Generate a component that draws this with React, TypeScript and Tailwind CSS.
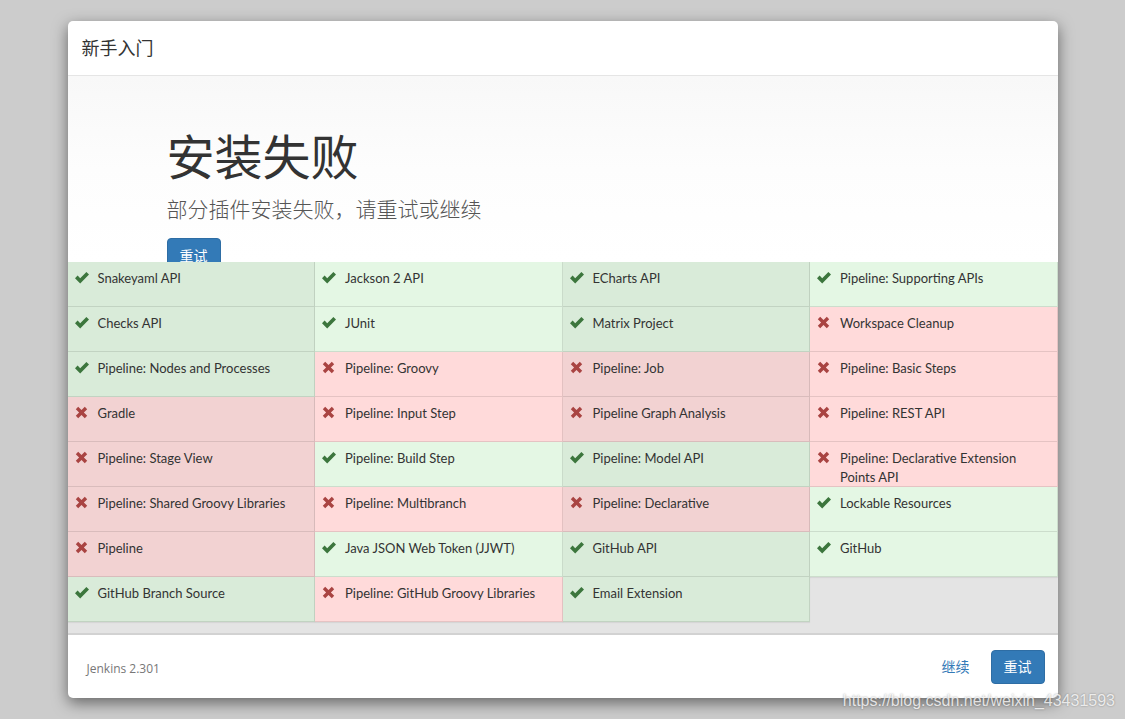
import React from 'react'

type Plugin = { name: string; ok: boolean }

const plugins: Plugin[] = [
  { name: 'Snakeyaml API', ok: true },
  { name: 'Jackson 2 API', ok: true },
  { name: 'ECharts API', ok: true },
  { name: 'Pipeline: Supporting APIs', ok: true },
  { name: 'Checks API', ok: true },
  { name: 'JUnit', ok: true },
  { name: 'Matrix Project', ok: true },
  { name: 'Workspace Cleanup', ok: false },
  { name: 'Pipeline: Nodes and Processes', ok: true },
  { name: 'Pipeline: Groovy', ok: false },
  { name: 'Pipeline: Job', ok: false },
  { name: 'Pipeline: Basic Steps', ok: false },
  { name: 'Gradle', ok: false },
  { name: 'Pipeline: Input Step', ok: false },
  { name: 'Pipeline Graph Analysis', ok: false },
  { name: 'Pipeline: REST API', ok: false },
  { name: 'Pipeline: Stage View', ok: false },
  { name: 'Pipeline: Build Step', ok: true },
  { name: 'Pipeline: Model API', ok: true },
  { name: 'Pipeline: Declarative Extension Points API', ok: false },
  { name: 'Pipeline: Shared Groovy Libraries', ok: false },
  { name: 'Pipeline: Multibranch', ok: false },
  { name: 'Pipeline: Declarative', ok: false },
  { name: 'Lockable Resources', ok: true },
  { name: 'Pipeline', ok: false },
  { name: 'Java JSON Web Token (JJWT)', ok: true },
  { name: 'GitHub API', ok: true },
  { name: 'GitHub', ok: true },
  { name: 'GitHub Branch Source', ok: true },
  { name: 'Pipeline: GitHub Groovy Libraries', ok: false },
  { name: 'Email Extension', ok: true },
]

const CheckIcon = () => (
  <svg width="16" height="13" viewBox="0 0 16 13" className="shrink-0">
    <path d="M1 7.2 L3.6 4.6 L6.2 7.2 L12.4 1 L15 3.6 L6.2 12.4 Z" fill="#3c763d" />
  </svg>
)

const CrossIcon = () => (
  <svg width="13" height="13" viewBox="0 0 13 13" className="shrink-0">
    <path
      d="M0.8 3.2 L3.2 0.8 L6.5 4.1 L9.8 0.8 L12.2 3.2 L8.9 6.5 L12.2 9.8 L9.8 12.2 L6.5 8.9 L3.2 12.2 L0.8 9.8 L4.1 6.5 Z"
      fill="#a94442"
    />
  </svg>
)

function PluginCell({ plugin, index }: { plugin: Plugin; index: number }) {
  const odd = index % 2 === 0
  const bg = plugin.ok
    ? odd
      ? 'bg-[#d9ebd9]'
      : 'bg-[#e4f7e4]'
    : odd
      ? 'bg-[#f2d2d2]'
      : 'bg-[#ffdada]'
  return (
    <div
      className={`${bg} h-[45px] flex items-start pl-[6px] pr-2 pt-[7px] border-r border-b border-black/10 shadow-[0_1px_1px_rgba(0,0,0,0.06)]`}
    >
      <div className="w-[24px] shrink-0 pt-[2px] flex">
        {plugin.ok ? <CheckIcon /> : <span className="pl-[1px]"><CrossIcon /></span>}
      </div>
      <span
        className="text-[13px] leading-[19px] text-[#333]"
        style={{ fontFamily: 'Lato, "Open Sans", sans-serif' }}
      >
        {plugin.name}
      </span>
    </div>
  )
}

export default function App() {
  return (
    <div
      className="relative min-h-screen bg-[#cccccc] flex justify-center pt-[21px]"
      style={{ fontFamily: '"Open Sans", "Noto Sans CJK SC", sans-serif' }}
    >
      <div className="w-[990px] h-[677px] bg-white rounded-[5px] shadow-[0_5px_15px_rgba(0,0,0,0.5)] overflow-hidden flex flex-col">
        <div className="h-[55px] border-b border-[#e5e5e5] flex items-center px-[14px]">
          <h4 className="text-[18px] text-[#333] pt-[1px]">新手入门</h4>
        </div>

        <div className="h-[186px] overflow-hidden bg-gradient-to-b from-[#f8f8f8] via-[#fdfdfd] to-white pl-[99px] pt-[54px]">
          <h1 className="text-[48px] leading-[53px] text-[#333]">安装失败</h1>
          <p className="mt-[11px] text-[21px] leading-[30px] text-[#555] font-light">
            部分插件安装失败，请重试或继续
          </p>
          <button className="mt-[14px] h-[34px] px-[12px] bg-[#337ab7] border border-[#2e6da4] rounded-[4px] text-white text-[14px]">
            重试
          </button>
        </div>

        <div className="flex-1 bg-[#e4e4e4] border-b-2 border-[#d2d2d2]">
          <div className="grid grid-cols-4">
            {plugins.map((p, i) => (
              <PluginCell key={p.name} plugin={p} index={i % 4} />
            ))}
          </div>
        </div>

        <div className="h-[63px] flex items-center justify-between pl-[19px] pr-[13px]">
          <span className="text-[12px] text-[#777] pt-[5px]">Jenkins 2.301</span>
          <div className="flex items-center gap-[21px]">
            <a className="text-[14px] text-[#337ab7]">继续</a>
            <button className="h-[34px] px-[12px] bg-[#337ab7] border border-[#2e6da4] rounded-[4px] text-white text-[14px]">
              重试
            </button>
          </div>
        </div>
      </div>

      <div
        className="absolute right-[10px] top-[689px] text-[16px] text-white/80 [text-shadow:0_0_2px_rgba(0,0,0,0.4)]"
        style={{ fontFamily: '"Liberation Sans", Arial, sans-serif' }}
      >
        https://blog.csdn.net/weixin_43431593
      </div>
    </div>
  )
}
